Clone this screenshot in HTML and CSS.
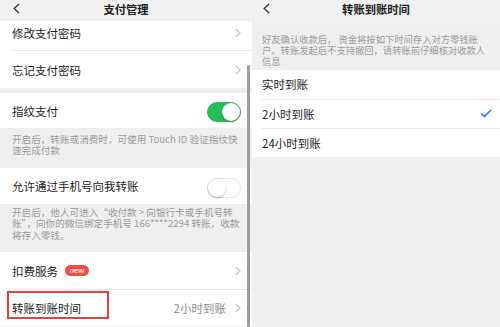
FILE: index.html
```html
<!DOCTYPE html>
<html>
<head>
    <meta charset="utf-8" />
    <title>支付管理</title>
    <link rel="stylesheet" href="styles.css">
</head>
<body>
    <div class="screen">

        <div class="phone left">
            <div class="bar">
                <svg class="back" width="7" height="11" viewBox="0 0 7 11"><path d="M6 1 L1.2 5.5 L6 10" /></svg>
                <span class="title">支付管理</span>
                <span></span>
            </div>

            <div class="group">
                <div class="row first"><span class="label">修改支付密码</span><svg class="arrow" width="6" height="10" viewBox="0 0 6 10"><path d="M1 1 L5 5 L1 9" /></svg></div>
                <div class="row r38"><span class="label">忘记支付密码</span><svg class="arrow" width="6" height="10" viewBox="0 0 6 10"><path d="M1 1 L5 5 L1 9" /></svg></div>
            </div>

            <div class="group gap">
                <div class="row r35"><span class="label">指纹支付</span><span class="switch on"><i></i></span></div>
            </div>
            <p class="tip tip1">开启后，转账或消费时，可使用 Touch ID 验证指纹快<br />速完成付款</p>

            <div class="group">
                <div class="row r36"><span class="label">允许通过手机号向我转账</span><span class="switch"><i></i></span></div>
            </div>
            <p class="tip tip2">开启后，他人可进入“收付款 &gt; 向银行卡或手机号转<br />账”，向你的微信绑定手机号 166****2294 转账，收款<br />将存入零钱。</p>

            <div class="group">
                <div class="row r37"><span class="label">扣费服务<span class="badge">new</span></span><svg class="arrow" width="6" height="10" viewBox="0 0 6 10"><path d="M1 1 L5 5 L1 9" /></svg></div>
                <div class="row r37 marked"><span class="label">转账到账时间</span><span class="value">2小时到账</span><svg class="arrow" width="6" height="10" viewBox="0 0 6 10"><path d="M1 1 L5 5 L1 9" /></svg><span class="mark"></span></div>
            </div>

            <div class="scroll"></div>
        </div>

        <div class="phone right">
            <div class="bar">
                <svg class="back" width="7" height="11" viewBox="0 0 7 11"><path d="M6 1 L1.2 5.5 L6 10" /></svg>
                <span class="title">转账到账时间</span>
                <span></span>
            </div>

            <p class="tip tip3">好友确认收款后，&nbsp;资金将按如下时间存入对方零钱账<br />户。转账发起后不支持撤回，请转账前仔细核对收款人<br />信息</p>

            <div class="group">
                <div class="row opt"><span class="label">实时到账</span></div>
                <div class="row opt"><span class="label">2小时到账</span><svg class="check" width="12" height="9" viewBox="0 0 12 9"><path d="M1 4.5 L4.3 7.6 L11 1" /></svg></div>
                <div class="row opt"><span class="label">24小时到账</span></div>
            </div>
        </div>

    </div>
</body>
</html>
```

FILE: styles.css
```css
body {
    margin: 0;
    font-family: "Noto Sans CJK SC", "Noto Sans", sans-serif;
    color: #1c1c1c;
}

.screen {
    display: flex;
    width: 500px;
    height: 327px;
    overflow: hidden;
    background: #efefef;
}

.phone {
    position: relative;
    height: 327px;
    overflow: hidden;
    background: #efefef;
}
.left {
    width: 252px;
}
.right {
    width: 248px;
}

/* top bar */
.bar {
    display: grid;
    grid-template-columns: 40px 1fr 40px;
    align-items: center;
    height: 21px;
    background: #f0f0f0;
    padding-bottom: 4px;
    box-sizing: border-box;
}
.back {
    margin-left: 13px;
}
.right .back {
    margin-left: 11px;
}
.back path {
    fill: none;
    stroke: #333;
    stroke-width: 1.3;
}
.title {
    text-align: center;
    font-size: 11.3px;
    font-weight: 600;
    line-height: 14px;
}

/* lists */
.group {
    background: #fff;
}
.gap {
    margin-top: 5px;
}
.row {
    display: flex;
    align-items: center;
    margin-left: 12px;
    padding-right: 11px;
    box-sizing: border-box;
    font-size: 11.5px;
    line-height: 14px;
}
.row + .row {
    border-top: 1px solid #e8e8e8;
}
.label {
    flex: 1;
    display: flex;
    align-items: center;
}
.first {
    height: 29px;
    padding-bottom: 5px;
}
.r38 { height: 38px; }
.r35 { height: 35px; }
.r36 { height: 36px; }
.r37 { height: 37px; }

.arrow path {
    fill: none;
    stroke: #c2c2c2;
    stroke-width: 1.2;
}
.value {
    color: #8a8a8a;
    margin-right: 9px;
}

.badge {
    margin-left: 7px;
    height: 11px;
    width: 24px;
    border-radius: 6px;
    background: #ee5048;
    color: #fff;
    font-size: 8px;
    line-height: 11px;
    text-align: center;
    font-family: "Liberation Sans", sans-serif;
}

/* switches */
.switch {
    display: flex;
    align-items: center;
    width: 34px;
    height: 20px;
    border-radius: 10px;
    box-sizing: border-box;
    border: 1px solid #e2e2e2;
    background: #fff;
    margin-top: 3px;
}
.switch i {
    width: 18px;
    height: 18px;
    border-radius: 50%;
    background: #fff;
    box-shadow: 0 1px 2px rgba(0, 0, 0, 0.3);
}
.switch.on {
    background: #27bd58;
    border-color: #27bd58;
    justify-content: flex-end;
}

/* notes */
.tip {
    margin: 0;
    color: #999;
    font-size: 9.6px;
    line-height: 11.5px;
    white-space: nowrap;
}
.tip1 {
    padding: 5.5px 12px 11.5px;
}
.tip2 {
    padding: 2.5px 12px 11px;
}
.tip3 {
    padding: 13px 10px 3.6px;
    line-height: 10.8px;
    font-size: 9.3px;
}

/* right list */
.opt {
    height: 29px;
    margin-left: 10px;
    padding-right: 8px;
}
.check path {
    fill: none;
    stroke: #2c7df0;
    stroke-width: 1.7;
}

/* overlays */
.marked {
    position: relative;
}
.mark {
    position: absolute;
    left: -5px;
    top: 1px;
    width: 102px;
    height: 28px;
    border: 2px solid #e8413a;
    box-sizing: border-box;
}
.scroll {
    position: absolute;
    left: 247px;
    top: 65px;
    width: 2.5px;
    height: 270px;
    border-radius: 1.5px;
    background: #9c9c9c;
}
```
